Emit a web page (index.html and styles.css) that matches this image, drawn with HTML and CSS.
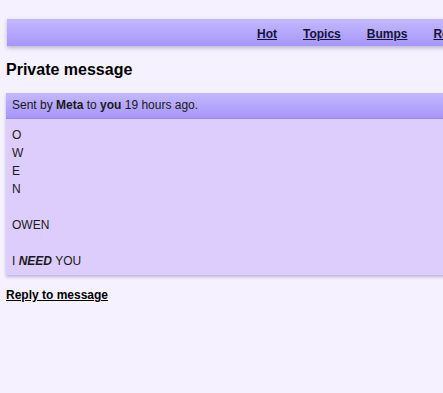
FILE: index.html
```html
<!DOCTYPE html>
<html lang="en">
<head>
    <meta charset="UTF-8">
    <title>Private message</title>
    <link rel="stylesheet" href="styles.css">
</head>
<body>
    <div class="page">
        <ul class="menu">
            <li><a href="#">Hot</a></li>
            <li><a href="#">Topics</a></li>
            <li><a href="#">Bumps</a></li>
            <li><a href="#">Replies</a></li>
            <li><a href="#">New topic</a></li>
        </ul>

        <h2>Private message</h2>

        <div class="message">
            <div class="message-head">Sent by <strong>Meta</strong> to <strong>you</strong> 19 hours ago.</div>
            <div class="message-body">
                O<br>W<br>E<br>N<br><br>OWEN<br><br>I <em><strong>NEED</strong></em> YOU
            </div>
        </div>

        <p class="reply"><a href="#">Reply to message</a></p>
    </div>
</body>
</html>
```

FILE: styles.css
```css
html, body {
    margin: 0;
    padding: 0;
    overflow: hidden;
}
body {
    font-family: "Liberation Sans", Arial, sans-serif;
    font-size: 12px;
    background-color: #f5f1fe;
    color: #1a1a1a;
}
.page {
    width: 700px;
    padding: 19px 0 0 6px;
}
.menu {
    list-style: none;
    margin: 0 0 0 1px;
    padding: 2px 0 0 250px;
    height: 25px;
    display: flex;
    align-items: center;
    gap: 26px;
    background: linear-gradient(#c3b8fd, #a796fa);
    box-shadow: 0 2px 4px rgba(60, 40, 120, 0.3);
}
.menu a {
    color: #14143a;
    font-weight: bold;
}
h2 {
    font-size: 16px;
    margin: 15px 0 14px;
    color: #000;
}
.message {
    box-shadow: 0 2px 3px rgba(60, 40, 120, 0.3);
}
.message-head {
    height: 25px;
    line-height: 25px;
    padding-left: 6px;
    background: linear-gradient(#c3b8fd, #a796fa);
    border-bottom: 1px solid #9a8ae6;
}
.message-body {
    background: #dccdfc;
    padding: 7px 6px 1px;
    line-height: 18px;
    height: 148px;
}
.reply {
    margin: 13px 0;
}
.reply a {
    color: #000;
    font-weight: bold;
}
```
